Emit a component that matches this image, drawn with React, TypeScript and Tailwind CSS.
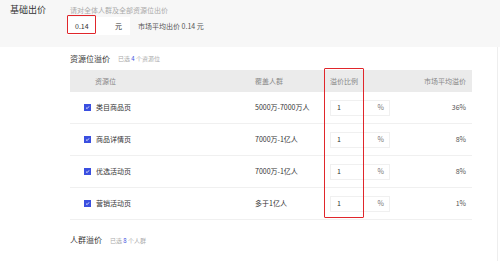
import React from "react";

const rows = [
  { name: "类目商品页", cover: "5000万-7000万人", avg: "36%" },
  { name: "商品详情页", cover: "7000万-1亿人", avg: "8%" },
  { name: "优选活动页", cover: "7000万-1亿人", avg: "8%" },
  { name: "营销活动页", cover: "多于1亿人", avg: "1%" },
];

function Check() {
  return (
    <span className="flex h-[7px] w-[7px] items-center justify-center bg-[#3a4fe0]">
      <svg width="5" height="5" viewBox="0 0 10 10">
        <path d="M2 5.2 L4.2 7.3 L8 2.8" stroke="white" strokeWidth="1.6" fill="none" />
      </svg>
    </span>
  );
}

export default function App() {
  return (
    <div
      className="relative h-[261px] w-[500px] overflow-hidden bg-white text-[#333]"
      style={{ fontFamily: '"Noto Sans CJK SC", "Noto Sans", sans-serif' }}
    >
      <div className="flex h-[47px] bg-[#f7f7f7]">
        <div className="w-[70px] pl-[10px] pt-[4px] text-[9px] leading-[12px] text-[#333]">基础出价</div>
        <div className="flex flex-col">
          <div className="pt-[5px] text-[7px] leading-[10px] text-[#aaa]">请对全体人群及全部资源位出价</div>
          <div className="ml-[-3px] mt-[2px] flex items-center">
            <div className="flex h-[18px] w-[63px] items-center justify-between bg-white pl-[8px] pr-[8px] text-[7px] text-[#333]">
              <span>0.14</span>
              <span>元</span>
            </div>
            <span className="ml-[8px] text-[7px] text-[#555]">市场平均出价 0.14 元</span>
          </div>
        </div>
      </div>
      <div className="absolute left-[67px] top-[15px] h-[19px] w-[29px] rounded-[1px] border border-[#e0262b]" />

      <div className="h-[214px] w-[498px] border-r border-[#eeeeee] pl-[70px] pr-[25px]">
        <div className="flex h-[23px] items-center">
          <span className="text-[8px] text-[#333]">资源位溢价</span>
          <span className="ml-[8px] text-[6px] text-[#aaa]">
            已选 <span className="text-[#3a4fe0]">4</span> 个资源位
          </span>
        </div>
        <div className="flex h-[22px] items-center bg-[#ebebeb] text-[7px] text-[#888]">
          <span className="w-[185px] pl-[25px]">资源位</span>
          <span className="w-[75px]">覆盖人群</span>
          <span className="w-[60px] pl-[0px]">溢价比例</span>
          <span className="flex-1 pr-[6px] text-right">市场平均溢价</span>
        </div>
        {rows.map((r) => (
          <div key={r.name} className="flex h-[32px] items-center border-b border-[#f0f0f0] text-[7px] text-[#333]">
            <div className="flex w-[185px] items-center pl-[14px]">
              <Check />
              <span className="ml-[5px]">{r.name}</span>
            </div>
            <span className="w-[75px]">{r.cover}</span>
            <div className="w-[60px]">
              <div className="flex h-[16px] w-[60px] items-center justify-between border border-[#f0f0f0] bg-white pl-[6px] pr-[5px]">
                <span>1</span>
                <span className="text-[#777]">%</span>
              </div>
            </div>
            <span className="flex-1 pr-[6px] text-right text-[#555]">{r.avg}</span>
          </div>
        ))}
        <div className="mt-[14px] flex items-center">
          <span className="text-[8px] text-[#333]">人群溢价</span>
          <span className="ml-[8px] text-[6px] text-[#aaa]">
            已选 <span className="text-[#3a4fe0]">8</span> 个人群
          </span>
        </div>
      </div>
      <div className="absolute left-[324px] top-[68px] h-[150px] w-[40px] rounded-[1px] border border-[#e0262b]" />
    </div>
  );
}
